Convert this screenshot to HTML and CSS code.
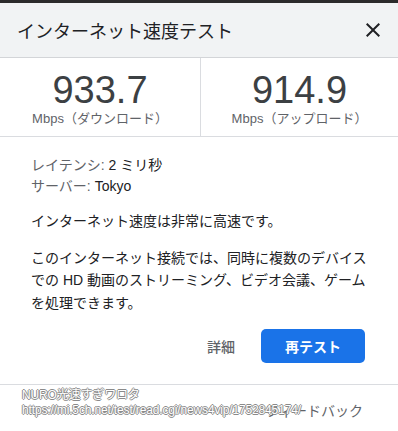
FILE: index.html
```html
<!DOCTYPE html>
<html lang="ja">
<head>
<meta charset="utf-8">
<link rel="stylesheet" href="styles.css">
</head>
<body>
<div class="topbar"></div>
<div class="dialog">
  <header class="header">
    <h1 class="title">インターネット速度テスト</h1>
    <svg class="close" width="24" height="24" viewBox="0 0 24 24"><path d="M19 6.41L17.59 5 12 10.59 6.41 5 5 6.41 10.59 12 5 17.59 6.41 19 12 13.41 17.59 19 19 17.59 13.41 12z" fill="#202124"/></svg>
  </header>
  <section class="stats">
    <div class="stat">
      <div class="value">933.7</div>
      <div class="unit">Mbps（ダウンロード）</div>
    </div>
    <div class="stat">
      <div class="value">914.9</div>
      <div class="unit">Mbps（アップロード）</div>
    </div>
  </section>
  <section class="body">
    <div class="meta">
      <div><span class="label">レイテンシ: </span>2 ミリ秒</div>
      <div><span class="label">サーバー: </span>Tokyo</div>
    </div>
    <p class="para first">インターネット速度は非常に高速です。</p>
    <p class="para">このインターネット接続では、同時に複数のデバイスでの HD 動画のストリーミング、ビデオ会議、ゲームを処理できます。</p>
    <div class="actions">
      <span class="details">詳細</span>
      <button class="retest">再テスト</button>
    </div>
  </section>
  <footer class="footer">
    <span class="feedback">フィードバック</span>
    <div class="overlay">
      <div>NURO光速すぎワロタ</div>
      <div>https://mi.5ch.net/test/read.cgi/news4vip/1752845174/</div>
    </div>
  </footer>
</div>
</body>
</html>
```

FILE: styles.css
```css
* { box-sizing: border-box; }
html, body {
  margin: 0;
  padding: 0;
  background: #ffffff;
  font-family: "Liberation Sans", "Noto Sans CJK JP", sans-serif;
  color: #202124;
}
.topbar {
  height: 3px;
  background: #2b2b2b;
}
.dialog {
  width: 398px;
}
.header {
  height: 55px;
  background: #f1f3f4;
  border-bottom: 1px solid #d3d5d8;
  display: flex;
  align-items: center;
  justify-content: space-between;
  padding: 0 13px 0 17px;
}
.title {
  margin: 0;
  font-size: 18px;
  font-weight: 400;
  color: #202124;
}
.close { display: block; }
.stats {
  display: grid;
  grid-template-columns: 200px 1fr;
  height: 79px;
  border-bottom: 1px solid #dadce0;
}
.stat {
  display: flex;
  flex-direction: column;
  align-items: center;
  padding-top: 11px;
}
.stat + .stat { border-left: 1px solid #dadce0; }
.value {
  font-size: 38px;
  line-height: 42px;
  color: #3c4043;
}
.unit {
  font-size: 13px;
  line-height: 16px;
  color: #5f6368;
}
.body {
  padding: 18px 31px 21px 31px;
  font-size: 14px;
}
.meta {
  line-height: 21px;
  color: #202124;
}
.label { color: #5f6368; }
.para {
  margin: 14px 0 0 0;
  line-height: 22.5px;
  color: #202124;
}
.para.first { margin-top: 13px; }
.actions {
  display: flex;
  justify-content: flex-end;
  align-items: center;
  margin-top: 15px;
  padding-right: 2px;
  gap: 26px;
}
.details {
  font-size: 14px;
  font-weight: 500;
  color: #5f6368;
}
.retest {
  width: 104px;
  height: 34px;
  border: none;
  border-radius: 5px;
  background: #1a73e8;
  color: #ffffff;
  font-family: "Liberation Sans", "Noto Sans CJK JP", sans-serif;
  font-size: 14px;
  font-weight: 700;
}
.footer {
  position: relative;
  border-top: 1px solid #dadce0;
  height: 45px;
  display: flex;
  justify-content: flex-end;
  align-items: flex-start;
  padding: 17px 35px 0 0;
}
.feedback {
  font-size: 14px;
  line-height: 18px;
  color: #5f6368;
}
.overlay {
  position: absolute;
  left: 22px;
  top: 3px;
  font-family: "Liberation Sans", "Noto Sans CJK JP", sans-serif;
  font-size: 12px;
  line-height: 15px;
  color: #ffffff;
  letter-spacing: -0.15px;
  text-shadow: 1px 0 0 #8a8a8a, -1px 0 0 #8a8a8a, 0 1px 0 #8a8a8a, 0 -1px 0 #8a8a8a;
}
```
